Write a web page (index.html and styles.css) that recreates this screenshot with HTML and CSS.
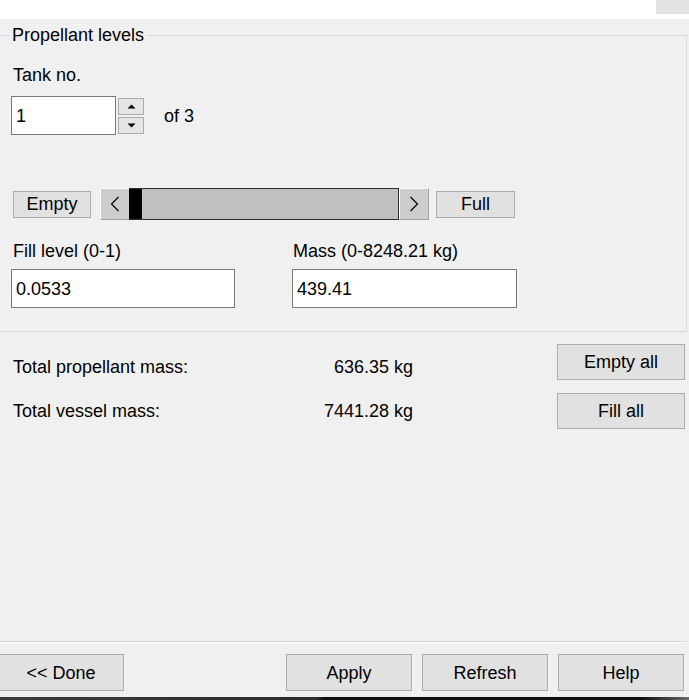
FILE: index.html
```html
<!DOCTYPE html>
<html>
<head>
<meta charset="utf-8">
<link rel="stylesheet" href="styles.css">
</head>
<body>
<div class="topbar"><div class="tab"></div></div>
<fieldset class="group">
  <legend>Propellant levels</legend>
  <div class="tank-label">Tank no.</div>
  <div class="spin-row">
    <div class="field spin-input">1</div>
    <div class="spinner">
      <div class="spin-btn"><svg width="9" height="5" viewBox="0 0 9 5"><polygon points="0.5,4.5 8.5,4.5 4.5,0.5" fill="#000"/></svg></div>
      <div class="spin-btn"><svg width="9" height="5" viewBox="0 0 9 5"><polygon points="0.5,0.5 8.5,0.5 4.5,4.5" fill="#000"/></svg></div>
    </div>
    <span class="of">of 3</span>
  </div>
  <div class="slider-row">
    <button class="btn empty-btn">Empty</button>
    <div class="scrollbar">
      <div class="arrow arrow-left"><svg width="10" height="16" viewBox="0 0 10 16"><polyline points="8.5,1 1.5,8 8.5,15" fill="none" stroke="#000" stroke-width="1.2"/></svg></div>
      <div class="track"><div class="thumb"></div></div>
      <div class="arrow arrow-right"><svg width="10" height="16" viewBox="0 0 10 16"><polyline points="1.5,1 8.5,8 1.5,15" fill="none" stroke="#000" stroke-width="1.2"/></svg></div>
    </div>
    <button class="btn full-btn">Full</button>
  </div>
  <div class="fields-row">
    <div class="col col-fill">
      <div class="flabel">Fill level (0-1)</div>
      <div class="field wide">0.0533</div>
    </div>
    <div class="col col-mass">
      <div class="flabel">Mass (0-8248.21 kg)</div>
      <div class="field wide">439.41</div>
    </div>
  </div>
</fieldset>
<div class="totals">
  <div class="trows">
    <div class="trow"><span>Total propellant mass:</span><span>636.35 kg</span></div>
    <div class="trow"><span>Total vessel mass:</span><span>7441.28 kg</span></div>
  </div>
  <div class="tbuttons">
    <button class="btn tbtn">Empty all</button>
    <button class="btn tbtn">Fill all</button>
  </div>
</div>
<div class="spacer"></div>
<div class="sep"></div>
<div class="footer">
  <button class="btn fbtn done">&lt;&lt; Done</button>
  <button class="btn fbtn">Apply</button>
  <button class="btn fbtn">Refresh</button>
  <button class="btn fbtn">Help</button>
</div>
<div class="taskbar"></div>
</body>
</html>
```
FILE: styles.css
```css
* { box-sizing: border-box; }
html, body { margin: 0; padding: 0; }
body {
  width: 689px;
  height: 700px;
  overflow: hidden;
  background: #f0f0f0;
  font-family: "Liberation Sans", Arial, sans-serif;
  font-size: 18px;
  line-height: 20px;
  color: #000;
  display: flex;
  flex-direction: column;
}
.topbar {
  flex: none;
  height: 19px;
  background: #fff;
  display: flex;
  justify-content: flex-end;
}
.tab { width: 33px; height: 14px; background: #e3e3e3; }

.group {
  flex: none;
  margin: 6px 2px 0 -1px;
  padding: 0 0 23px 11px;
  border: 1px solid #d9d9d9;
  min-width: 0;
}
.group legend {
  margin-left: -2px;
  padding: 0 3px;
  line-height: 20px;
}
.tank-label { margin-top: 20px; padding-left: 2px; }
.spin-row {
  margin-top: 11px;
  height: 39px;
  display: flex;
  align-items: center;
}
.field {
  background: #fff;
  border: 1px solid #7a7a7a;
  padding-left: 4px;
  display: flex;
  align-items: center;
}
.spin-input { width: 105px; height: 39px; }
.spinner {
  margin-left: 2px;
  display: flex;
  flex-direction: column;
  gap: 2px;
}
.spin-btn {
  width: 26px;
  height: 17px;
  background: #e5e5e5;
  border: 1px solid #acacac;
  display: flex;
  align-items: center;
  justify-content: center;
}
.of { margin-left: 20px; }

.btn {
  font-family: inherit;
  font-size: 18px;
  line-height: 20px;
  color: #000;
  background: #e1e1e1;
  border: 1px solid #adadad;
  padding: 0;
  margin: 0;
}
.slider-row {
  margin-top: 53px;
  height: 32px;
  display: flex;
  align-items: center;
}
.empty-btn { margin-left: 2px; width: 78px; height: 27px; }
.full-btn { margin-left: 7px; width: 79px; height: 27px; }
.scrollbar {
  margin-left: 9px;
  height: 32px;
  display: flex;
}
.arrow {
  height: 32px;
  background: #cdcdcd;
  border-top: 1px solid #fff;
  border-left: 1px solid #fff;
  border-bottom: 1px solid #a0a0a0;
  display: flex;
  align-items: center;
  justify-content: center;
}
.arrow-left { width: 29px; }
.arrow-right { width: 30px; border-right: 1px solid #a0a0a0; }
.track {
  width: 270px;
  height: 32px;
  background: #c0c0c0;
  border-top: 1px solid #2e2e2e;
  border-bottom: 1px solid #2e2e2e;
  border-right: 1px solid #2e2e2e;
  display: flex;
}
.thumb { width: 13px; background: #000; }

.fields-row {
  margin-top: 21px;
  display: flex;
  gap: 57px;
}
.col-fill { width: 224px; }
.col-mass { width: 225px; }
.col-fill .flabel { padding-left: 2px; }
.col-mass .flabel { padding-left: 1px; }
.flabel { margin-bottom: 8px; }
.wide { height: 39px; }

.totals {
  flex: none;
  margin-top: 12px;
  padding: 0 4px 0 13px;
  display: flex;
}
.trows {
  width: 400px;
  padding-top: 13px;
  display: flex;
  flex-direction: column;
  gap: 24px;
}
.trow { display: flex; justify-content: space-between; }
.tbuttons {
  margin-left: auto;
  display: flex;
  flex-direction: column;
  gap: 13px;
}
.tbtn { width: 128px; height: 36px; }

.spacer { flex: 1; }
.sep {
  flex: none;
  height: 2px;
  margin-right: 3px;
  border-top: 1px solid #d5d5d5;
  border-bottom: 1px solid #fdfdfd;
}
.footer {
  flex: none;
  margin-top: 11px;
  margin-bottom: 6px;
  padding-right: 5px;
  display: flex;
  gap: 10px;
}
.fbtn { width: 126px; height: 37px; }
.done { margin-left: -2px; margin-right: auto; }
.taskbar {
  flex: none;
  height: 3px;
  background: linear-gradient(90deg, #3a3a3a 0%, #2c2c2c 46%, #0e0e0e 47%, #0e0e0e 93%, #6a6a6a 100%);
}
```
